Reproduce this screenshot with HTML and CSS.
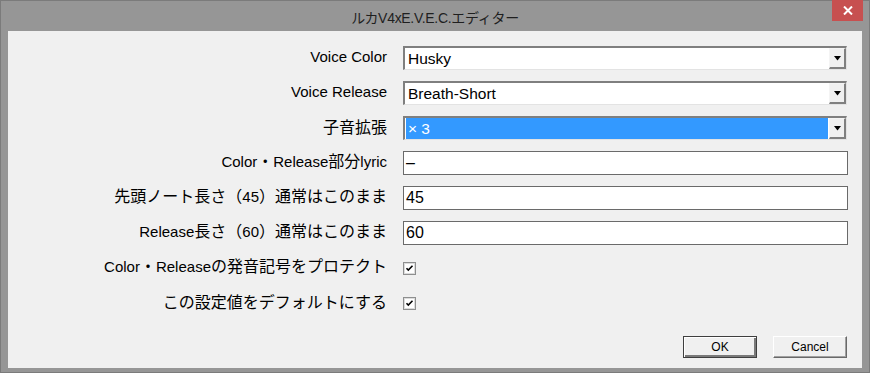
FILE: index.html
```html
<!DOCTYPE html>
<html lang="ja">
<head>
<meta charset="utf-8">
<title>ルカV4xE.V.E.C.エディター</title>
<link rel="stylesheet" href="styles.css">
</head>
<body>
<div class="window">
  <div class="titlebar">
    <span class="title">ルカV4xE.V.E.C.エディター</span>
  </div>
  <div class="close"><svg width="10" height="9" viewBox="0 0 10 9"><path d="M1 0.5 L9 8.5 M9 0.5 L1 8.5" stroke="#fff" stroke-width="2"/></svg></div>
  <div class="client">
    <div class="form">
      <div class="lbl"><span class="lt">Voice Color</span></div>
      <div class="combo"><span class="val">Husky</span><span class="drop"><svg width="7" height="5" viewBox="0 0 7 5"><path d="M0 0 H7 L3.5 4.5 Z" fill="#000"/></svg></span></div>

      <div class="lbl"><span class="lt">Voice Release</span></div>
      <div class="combo"><span class="val">Breath-Short</span><span class="drop"><svg width="7" height="5" viewBox="0 0 7 5"><path d="M0 0 H7 L3.5 4.5 Z" fill="#000"/></svg></span></div>

      <div class="lbl">子音拡張</div>
      <div class="combo"><span class="val sel">× 3</span><span class="drop"><svg width="7" height="5" viewBox="0 0 7 5"><path d="M0 0 H7 L3.5 4.5 Z" fill="#000"/></svg></span></div>

      <div class="lbl"><span class="lt">Color</span>・<span class="lt">Release</span>部分<span class="lt">lyric</span></div>
      <div class="text"><span class="lt">–</span></div>

      <div class="lbl">先頭ノート長さ（<span class="lt">45</span>）通常はこのまま</div>
      <div class="text"><span class="lt">45</span></div>

      <div class="lbl"><span class="lt">Release</span>長さ（<span class="lt">60</span>）通常はこのまま</div>
      <div class="text"><span class="lt">60</span></div>

      <div class="lbl"><span class="lt">Color</span>・<span class="lt">Release</span>の発音記号をプロテクト</div>
      <div class="check"><svg width="13" height="13" viewBox="0 0 13 13"><rect x="0.5" y="0.5" width="12" height="12" fill="#fff" stroke="#8e8f8f"/><rect x="1.5" y="1.5" width="10" height="10" fill="#fff" stroke="#dcdcdc"/><path d="M3.5 6.2 L5.3 8 L9.5 3.8" fill="none" stroke="#000" stroke-width="1.6"/></svg></div>

      <div class="lbl">この設定値をデフォルトにする</div>
      <div class="check"><svg width="13" height="13" viewBox="0 0 13 13"><rect x="0.5" y="0.5" width="12" height="12" fill="#fff" stroke="#8e8f8f"/><rect x="1.5" y="1.5" width="10" height="10" fill="#fff" stroke="#dcdcdc"/><path d="M3.5 6.2 L5.3 8 L9.5 3.8" fill="none" stroke="#000" stroke-width="1.6"/></svg></div>
    </div>
    <div class="buttons">
      <div class="btn default">OK</div>
      <div class="btn">Cancel</div>
    </div>
  </div>
</div>
</body>
</html>
```

FILE: styles.css
```css
html, body {
  margin: 0;
  padding: 0;
  background: #959595;
}

.window {
  position: relative;
  width: 870px;
  height: 373px;
  box-sizing: border-box;
  border: 1px solid #7b7b7b;
  background: #969696;
  padding: 0 7px 4px 7px;
  display: flex;
  flex-direction: column;
}

.titlebar {
  height: 30px;
  display: flex;
  align-items: center;
  justify-content: center;
  flex: none;
}

.title {
  font-family: "Liberation Sans", "Noto Sans CJK JP", sans-serif;
  font-size: 14px;
  color: #1f1f1f;
  letter-spacing: -0.3px;
  padding-top: 1px;
}

.close {
  position: absolute;
  top: -1px;
  right: 6px;
  width: 31px;
  height: 21px;
  background: #c75050;
  display: flex;
  align-items: center;
  justify-content: center;
}

.client {
  flex: 1;
  background: #f0f0f0;
  display: flex;
  flex-direction: column;
}

.form {
  display: grid;
  grid-template-columns: 379px 445px;
  column-gap: 16px;
  row-gap: 11px;
  grid-auto-rows: 24px;
  padding-top: 15px;
}

.lbl {
  font-family: "Noto Sans CJK JP", sans-serif;
  font-size: 16px;
  line-height: 22px;
  color: #000;
  text-align: right;
  align-self: center;
  white-space: nowrap;
  padding-bottom: 5px;
}

.lt {
  font-family: "Liberation Sans", sans-serif;
  font-size: 15px;
}

.combo {
  box-sizing: border-box;
  width: 444px;
  height: 24px;
  border-top: 2px solid #7f7f7f;
  border-left: 2px solid #7f7f7f;
  border-right: 1px solid #e3e3e3;
  border-bottom: 1px solid #e3e3e3;
  background: #fff;
  display: flex;
}

.val {
  flex: 1;
  font-family: "Liberation Sans", sans-serif;
  font-size: 15.5px;
  line-height: 21px;
  padding-left: 3px;
  color: #000;
}

.val.sel {
  margin: 0 1px 0 1px;
  padding-left: 2px;
  background: #3399ff;
  color: #fff;
  font-family: "Liberation Sans", "Noto Sans CJK JP", sans-serif;
}

.drop {
  box-sizing: border-box;
  width: 17px;
  height: 21px;
  background: #f0f0f0;
  border-top: 1px solid #f4f4f4;
  border-left: 1px solid #f4f4f4;
  border-right: 2px solid #808080;
  border-bottom: 2px solid #808080;
  display: flex;
  align-items: center;
  justify-content: center;
}

.text {
  box-sizing: border-box;
  width: 445px;
  height: 24px;
  border: 1px solid #6a6a6a;
  background: #fff;
  padding-left: 2px;
  line-height: 22px;
  color: #000;
}

.text .lt {
  font-size: 16px;
}

.check {
  align-self: center;
  width: 13px;
  height: 13px;
  display: flex;
}

.buttons {
  display: flex;
  justify-content: flex-end;
  gap: 16px;
  padding-right: 15px;
  margin-top: 21px;
}

.btn {
  box-sizing: border-box;
  width: 74px;
  height: 22px;
  background: #f0f0f0;
  border-top: 1px solid #fff;
  border-left: 1px solid #fff;
  border-right: 1px solid #696969;
  border-bottom: 1px solid #696969;
  box-shadow: inset -1px -1px 0 #a0a0a0;
  font-family: "Liberation Sans", sans-serif;
  font-size: 12px;
  line-height: 20px;
  text-align: center;
  color: #000;
}

.btn.default {
  border: 1px solid #3f3f3f;
  box-shadow: inset 1px 1px 0 #fff, inset -2px -2px 0 #7a7a7a;
}
```
